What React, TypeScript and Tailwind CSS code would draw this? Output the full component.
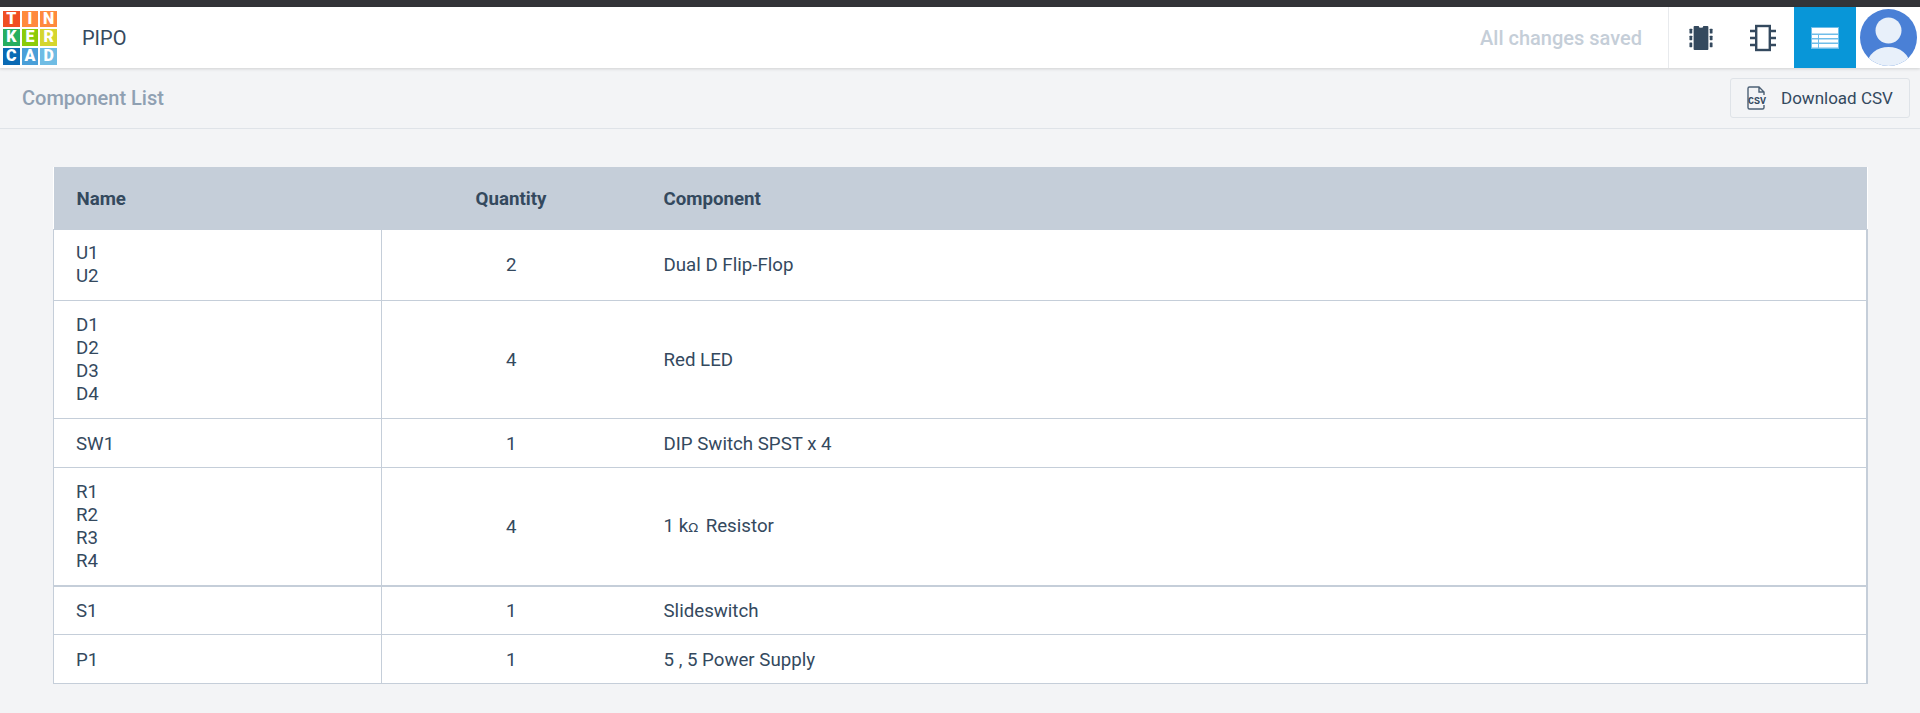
const logo: [string, string][] = [
  ["T", "#f04e23"], ["I", "#ff8a3d"], ["N", "#ff8a3d"],
  ["K", "#27ae60"], ["E", "#8ccb0a"], ["R", "#d5d62e"],
  ["C", "#0a6ab4"], ["A", "#4a9fd8"], ["D", "#6fbce4"],
];

const rows = [
  { names: ["U1", "U2"], q: 2, c: <>Dual D Flip-Flop</>, h: "h-[71px]", thick: false, pad: "pt-[1px]" },
  { names: ["D1", "D2", "D3", "D4"], q: 4, c: <>Red LED</>, h: "h-[118px]", thick: false, pad: "pt-[2px]" },
  { names: ["SW1"], q: 1, c: <>DIP Switch SPST x 4</>, h: "h-[49px]", thick: false, pad: "pt-[3px]" },
  { names: ["R1", "R2", "R3", "R4"], q: 4, c: <>1 k<span className="font-['DejaVu_Sans',sans-serif] text-[13px] mr-[3px]">Ω</span> Resistor</>, h: "h-[119px]", thick: true, pad: "pt-[2px]" },
  { names: ["S1"], q: 1, c: <>Slideswitch</>, h: "h-[48px]", thick: false, pad: "pt-[3px]" },
  { names: ["P1"], q: 1, c: <>5 , 5 Power Supply</>, h: "h-[49px]", thick: false, pad: "pt-[3px]" },
];

function ChipFilled() {
  return (
    <svg width="24" height="26" viewBox="0 0 26 28" fill="#34495e">
      <path d="M6 1h4.500a2.500 2 0 0 0 5 0H20a1 1 0 0 1 1 1v24a1 1 0 0 1-1 1H6a1 1 0 0 1-1-1V2a1 1 0 0 1 1-1z" />
      <rect x="0.500" y="4" width="3" height="5" rx="0.500" />
      <rect x="0.500" y="11.500" width="3" height="5" rx="0.500" />
      <rect x="0.500" y="19" width="3" height="5" rx="0.500" />
      <rect x="22.500" y="4" width="3" height="5" rx="0.500" />
      <rect x="22.500" y="11.500" width="3" height="5" rx="0.500" />
      <rect x="22.500" y="19" width="3" height="5" rx="0.500" />
    </svg>
  );
}

function ChipOutline() {
  return (
    <svg width="26" height="28" viewBox="0 0 26 28" fill="none" stroke="#34495e" strokeWidth="2.400">
      <rect x="6.200" y="2" width="13.600" height="24" />
      <path d="M0 7h6M0 14h6M0 21h6M20 7h6M20 14h6M20 21h6" />
    </svg>
  );
}

function TableIcon() {
  return (
    <svg width="28" height="22" viewBox="0 0 28 22">
      <rect x="0" y="0" width="28" height="22" fill="#6fbde9" />
      <rect x="1" y="1" width="26" height="5.500" fill="#fff" />
      <rect x="1" y="8" width="6" height="3" fill="#fff" />
      <rect x="8" y="8" width="19" height="3" fill="#fff" />
      <rect x="1" y="12.500" width="6" height="3" fill="#fff" />
      <rect x="8" y="12.500" width="19" height="3" fill="#fff" />
      <rect x="1" y="17" width="6" height="3.500" fill="#fff" />
      <rect x="8" y="17" width="19" height="3.500" fill="#fff" />
    </svg>
  );
}

function Avatar() {
  return (
    <svg width="57" height="57" viewBox="0 0 57 57">
      <defs>
        <clipPath id="av"><circle cx="28.500" cy="28.500" r="28.500" /></clipPath>
      </defs>
      <g clipPath="url(#av)">
        <rect width="57" height="57" fill="#4a80d6" />
        <circle cx="28.500" cy="21.500" r="13" fill="#e8f0fa" />
        <ellipse cx="28.500" cy="55" rx="21" ry="17" fill="#e8f0fa" />
      </g>
    </svg>
  );
}

function CsvIcon() {
  return (
    <svg width="21" height="24" viewBox="0 0 21 24" fill="none" stroke="#4c6075" strokeWidth="1.400">
      <path d="M2 8V2.500a1.500 1.500 0 0 1 1.500-1.500H13l5 5v3M13 1v5h5M2 8v13.500a1.500 1.500 0 0 0 1.500 1.500H16.500a1.500 1.500 0 0 0 1.500-1.500V19" />
      <text x="11" y="17.500" textAnchor="middle" fontSize="10" fontWeight="700" fontFamily="'Liberation Mono', monospace" fill="#34495e" stroke="none">CSV</text>
    </svg>
  );
}

export default function App() {
  return (
    <div className="h-[713px] overflow-hidden bg-[#f3f4f6] text-[#34495e] font-['Roboto',sans-serif] flex flex-col">
      <div className="h-[7px] bg-[#333438] shrink-0" />
      <header className="h-[61px] shrink-0 bg-white flex items-center shadow-[0_1px_3px_rgba(0,0,0,0.15)] relative z-10">
        <div className="ml-[3px] w-[54px] h-[54px] grid grid-cols-3 gap-[2px]">
          {logo.map(([l, c]) => (
            <div key={l} className="flex items-center justify-center text-white font-black text-[16px] leading-none" style={{ backgroundColor: c }}>
              {l}
            </div>
          ))}
        </div>
        <div className="ml-[25px] text-[20px]">PIPO</div>
        <div className="ml-auto text-[20px] font-medium text-[#c5ced8] mr-[26px]">All changes saved</div>
        <div className="h-full flex border-l border-[#e8eaed]">
          <div className="w-[63px] flex items-center justify-center"><ChipFilled /></div>
          <div className="w-[62px] flex items-center justify-center"><ChipOutline /></div>
          <div className="w-[62px] bg-[#0896d8] flex items-center justify-center"><TableIcon /></div>
          <div className="w-[64px] flex items-center justify-center"><Avatar /></div>
        </div>
      </header>
      <div className="h-[61px] shrink-0 flex items-center justify-between border-b border-[#dfe3e8] pl-[22px] pr-[10px]">
        <div className="text-[20px] font-medium text-[#8fa0b2]">Component List</div>
        <button className="w-[180px] h-[40px] border border-[#dfe3e8] rounded-[3px] flex items-center pl-[15px] text-[17px] text-[#34495e] whitespace-nowrap">
          <CsvIcon />
          <span className="ml-[14px] pt-[1px]">Download CSV</span>
        </button>
      </div>
      <div className="pt-[38px] pl-[53px]">
        <table className="w-[1815px] bg-white border-collapse table-fixed text-[18.700px] leading-[23px]">
          <thead>
            <tr className="h-[62px] bg-[#c5ced9]">
              <th className="w-[328px] text-left font-bold pl-[23px] pt-[3px]">Name</th>
              <th className="w-[259px] text-center font-bold pt-[3px]">Quantity</th>
              <th className="text-left font-bold pl-[23px] pt-[3px]">Component</th>
            </tr>
          </thead>
          <tbody>
            {rows.map((r) => (
              <tr key={r.names[0]} className={r.h}>
                <td className={`border-l border-r border-t border-[#c5ced9] pl-[22px] ${r.pad} ${r.thick ? "border-b-2" : "border-b"}`}>
                  {r.names.map((n) => <div key={n}>{n}</div>)}
                </td>
                <td className={`border-y border-[#c5ced9] text-center ${r.pad} ${r.thick ? "border-b-2" : ""}`}>{r.q}</td>
                <td className={`border-y border-r-2 border-[#c5ced9] pl-[23px] ${r.pad} ${r.thick ? "border-b-2" : ""}`}>{r.c}</td>
              </tr>
            ))}
          </tbody>
        </table>
      </div>
    </div>
  );
}
